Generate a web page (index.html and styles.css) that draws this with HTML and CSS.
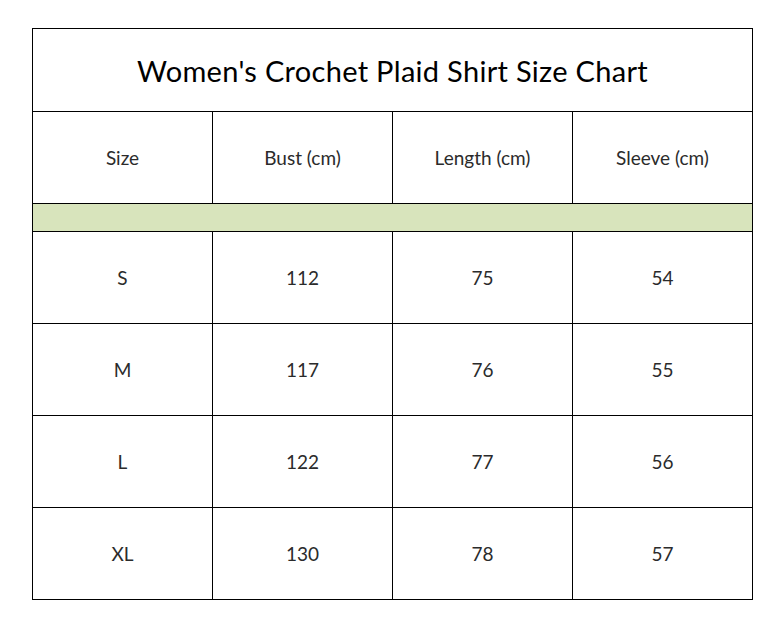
FILE: index.html
```html
<!DOCTYPE html>
<html lang="en">
<head>
<meta charset="utf-8">
<title>Women's Crochet Plaid Shirt Size Chart</title>
<link rel="stylesheet" href="styles.css">
</head>
<body>
<div class="chart">
  <div class="cell title">Women's Crochet Plaid Shirt Size Chart</div>
  <div class="cell head">Size</div>
  <div class="cell head">Bust (cm)</div>
  <div class="cell head">Length (cm)</div>
  <div class="cell head">Sleeve (cm)</div>
  <div class="cell band"></div>
  <div class="cell">S</div><div class="cell">112</div><div class="cell">75</div><div class="cell">54</div>
  <div class="cell">M</div><div class="cell">117</div><div class="cell">76</div><div class="cell">55</div>
  <div class="cell">L</div><div class="cell">122</div><div class="cell">77</div><div class="cell">56</div>
  <div class="cell">XL</div><div class="cell">130</div><div class="cell">78</div><div class="cell">57</div>
</div>
</body>
</html>
```
FILE: styles.css
```css
html, body {
  margin: 0;
  padding: 0;
  background: #ffffff;
}
body {
  padding: 28px 0 0 32px;
  font-family: Lato, "Open Sans", sans-serif;
  color: #2b2b2b;
}
.chart {
  display: grid;
  grid-template-columns: repeat(4, 179px);
  grid-template-rows: 82px 91px 27px 91px 91px 91px 91px;
  gap: 1px;
  width: 719px;
  border: 1px solid #000;
  background: #000;
}
.cell {
  background: #fff;
  display: flex;
  align-items: center;
  justify-content: center;
  font-size: 19px;
}
.title {
  grid-column: 1 / -1;
  font-size: 29px;
  letter-spacing: 0.3px;
  color: #000;
}
.band {
  grid-column: 1 / -1;
  background: #d8e4bc;
}
```
